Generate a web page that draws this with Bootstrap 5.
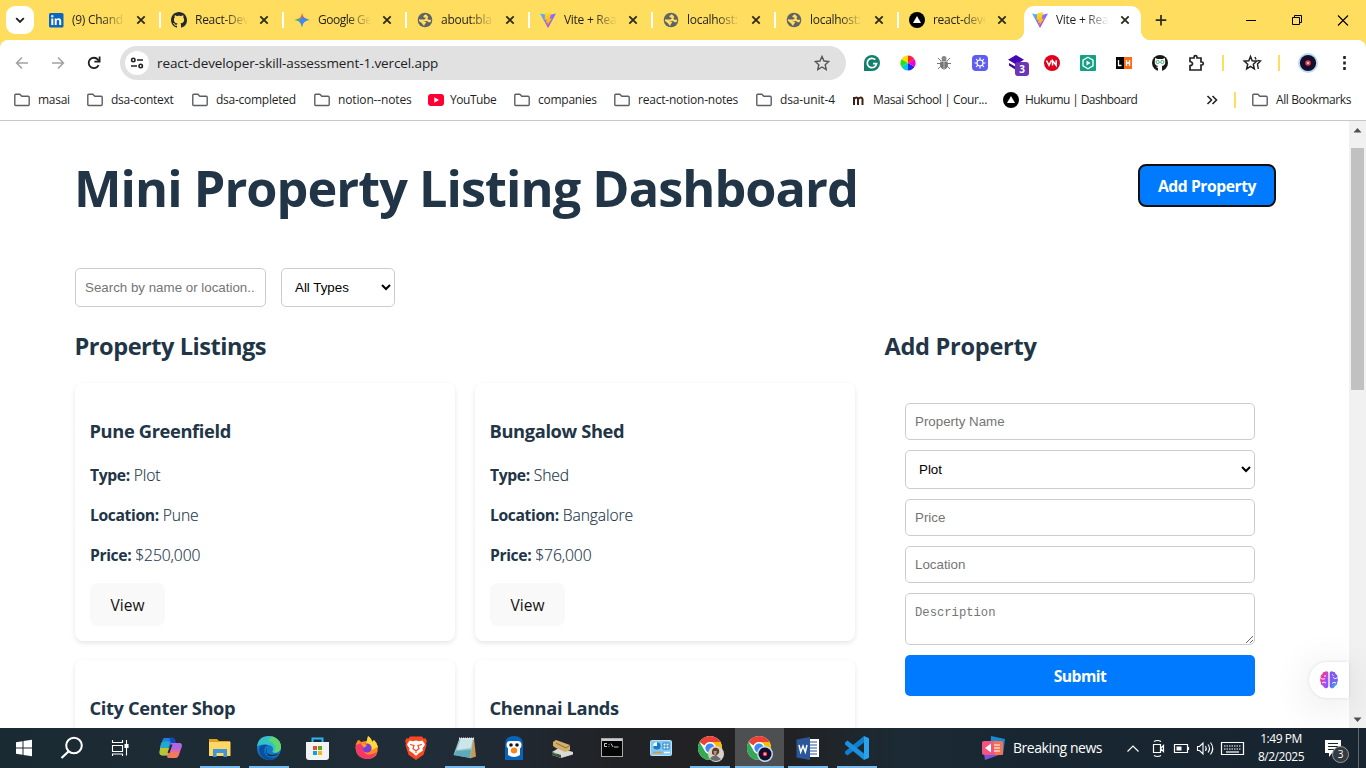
<!DOCTYPE html>
<html lang="en" data-bs-theme="light">
<head>
<meta charset="utf-8">
<meta name="viewport" content="width=device-width, initial-scale=1">
<title>Mini Property Listing Dashboard</title>
<link href="https://cdn.jsdelivr.net/npm/bootstrap@5.3.0/dist/css/bootstrap.min.css" rel="stylesheet">
<style>
  body{font-family:"Open Sans","Noto Sans",sans-serif;font-size:12px;line-height:16px;color:#1f1f1f;background:#fff}
  svg{display:block;flex:none}
  /* tab strip */
  .strip{height:40px;background:#ffdd5f;flex:none}
  .tab-search{width:28px;height:28px;margin:6px 6px 0;border-radius:9px;background:#fff}
  .tab-item{width:117px;margin-right:6px;height:34px;margin-top:6px;padding:0 8px 6px 8px;position:relative}
  .tab-item svg.fav{width:16px;height:16px;margin-right:8px;margin-left:0}
  .tab-title{width:54px;overflow:hidden;white-space:nowrap;letter-spacing:-.28px;-webkit-mask-image:linear-gradient(90deg,#000 55%,transparent 98%);mask-image:linear-gradient(90deg,#000 55%,transparent 98%)}
  .tab-close{margin-left:10px}
  .tab-item:not(.on):not(.last)::after{content:"";position:absolute;right:-4px;top:6px;width:2px;height:16px;background:#fff}
  .tab-item.on{background:#fff;border-radius:10px 10px 0 0}
  .tab-item.on::before,.tab-item.on::after{content:"";position:absolute;bottom:0;width:10px;height:10px}
  .tab-item.on::before{left:-10px;background:radial-gradient(circle at 0 0,transparent 10px,#fff 10.5px)}
  .tab-item.on::after{right:-10px;background:radial-gradient(circle at 100% 0,transparent 10px,#fff 10.5px)}
  .win-btns{width:138px;height:40px}
  .win-btns svg{width:46px}
  /* toolbar */
  .tools{height:46px;flex:none;background:linear-gradient(#ffdd5f,#ffdd5f) top/100% 10px no-repeat}
  .tools>div{background:#fff;border-radius:8px 8px 0 0;height:46px}
  .omni{width:726px;height:34px;border-radius:17px;background:#e1e1e1;padding:0 16px 0 5px}
  .site-info{width:24px;height:24px;border-radius:50%;background:#fff}
  .url{font-size:13.5px;letter-spacing:-.11px;margin-left:8px;color:#202124}
  .ext{width:36px;position:relative}
  .ext-num{position:absolute;left:17px;top:7px;width:14px;height:14px;border-radius:3px;background:#6b35b5;color:#fff;font:bold 10px/14px "Open Sans",sans-serif;text-align:center}
  .vbar{width:2px;height:16px;background:#ffdd5f}
  /* bookmarks */
  .marks{height:35px;flex:none;padding:0 0 7px 14px;border-bottom:1px solid #c7c7c7;display:grid;grid-template-columns:73px 105px 122px 114px 86px 100px 142px 96px 151px 203px 28px 18px auto}
  .marks>div{display:flex;align-items:center;white-space:nowrap}
  .marks span{margin-left:8px;letter-spacing:-.26px}
  /* page */
  .view{height:607px;flex:none;overflow:hidden;color:#213547}
  .page{width:1349px;padding:31px 74px 0 75px;position:relative;font-size:15.7px;line-height:24px}
  .page h1{font-size:50.4px;line-height:56px;font-weight:700;letter-spacing:-.95px;margin:8px 0 0 -1px}
  .page h2{font-size:23.6px;line-height:29px;font-weight:700;letter-spacing:-.48px;margin:0 0 0 -.5px}
  .page h3{font-size:18.3px;line-height:24px;font-weight:700;letter-spacing:-.36px;margin:0 0 20px -.5px}
  .add{width:138px;height:43px;border:2px solid #101010;border-radius:8px;background:#007bff;color:#fff;font-weight:700;font-size:15.7px;letter-spacing:-.45px;margin:12px -1px 0 0;padding:0}
  .ctl{font-family:"Liberation Sans",Arial,sans-serif;font-size:13.333px;line-height:normal;border:1px solid #ccc;border-radius:5px;background:#fff;color:#000;padding:9px 9px;margin:0;height:37px;display:block}
  .ctl::placeholder{color:#757575;opacity:1}
  select.ctl{height:39px}
  textarea.ctl{height:52px;font-family:"Liberation Mono",monospace;font-size:12.2px;padding-top:12px;resize:both}
  .listing{width:780px;display:grid;grid-template-columns:380px 380px;gap:19px 20px;margin-top:22px}
  .prop{height:258px;border-radius:8px;padding:36px 15px 0;box-shadow:0 2px 5px rgba(0,0,0,.1)}
  .prop p{margin:0 0 16px;letter-spacing:-.12px;font-weight:300;-webkit-text-stroke:.15px #213547}
  .prop b{font-weight:700;letter-spacing:-.38px;-webkit-text-stroke:0}
  .view-btn{width:75px;height:43px;border:0;border-radius:8px;background:#f9f9f9;color:#111;font-size:15.5px;font-weight:400;padding:0}
  .form-col{width:390px;margin-left:30px}
  .form-box{padding:20px 20px 0;margin-top:22px;display:grid;gap:10px;width:390px}
  .submit{height:41px;border:0;border-radius:5px;background:#007bff;color:#fff;font-weight:700;letter-spacing:-.55px}
  .brain{position:absolute;right:0;top:541px;width:40px;height:36px;border-radius:18px 0 0 18px;background:#fff;box-shadow:0 0 3px rgba(0,0,0,.12),0 6px 40px rgba(0,0,0,.12);padding:8px 0 0 10px}
  .sbar{width:17px;background:#f1f1f1}
  .sbar i{display:block;width:13px;height:242px;background:#c1c1c1;margin:0 auto}
  /* taskbar */
  .task{height:40px;flex:none;background:linear-gradient(90deg,#1a2a33 0,#1c2b34 12%,#202d38 30%,#202a35 36%,#212225 45%,#222224 58%,#1b2a34 66%,#182631 75%,#182531);color:#fff}
  .tk{width:49px;height:40px;position:relative}
  .tk.s{width:48px}
  .tk.run::after{content:"";position:absolute;bottom:0;left:4px;width:40px;height:2px;background:#76b9ed}
  .tk.cur{background:#4e4f51}
  .tk.cur::after{left:0;width:49px}
  .clock{width:60px;line-height:18px;letter-spacing:-.48px;margin-left:3px}
  .note-n{position:absolute;left:10px;top:18px;width:17px;height:17px;border-radius:50%;border:1px solid #9a9a9a;background:#333a40;font-size:10px;line-height:15px;text-align:center}
</style>
</head>
<body class="vh-100 overflow-hidden d-flex flex-column">

<svg width="0" height="0" class="position-absolute">
  <defs>
    <linearGradient id="gv" x1="0" y1="0" x2="1" y2="1"><stop offset="0" stop-color="#41c8ff"/><stop offset=".75" stop-color="#b03bfd"/></linearGradient>
    <linearGradient id="gy" x1="0" y1="0" x2="0" y2="1"><stop offset="0" stop-color="#ffdc30"/><stop offset="1" stop-color="#ffa800"/></linearGradient>
    <linearGradient id="gb" x1="0" y1="0" x2="1" y2="1"><stop offset="0" stop-color="#ff9a2e"/><stop offset=".3" stop-color="#e9399d"/><stop offset=".6" stop-color="#b14df0"/><stop offset="1" stop-color="#7a5cf7"/></linearGradient>
    <symbol id="x" viewBox="0 0 10 10"><path d="M1.300 1.300l7.400 7.400M8.700 1.300L1.300 8.700" stroke="#2a2a20" stroke-width="1.800"/></symbol>
    <symbol id="vite" viewBox="0 0 16 16"><path d="M0 1.600L8 16 16 1.600 8.500 3z" fill="url(#gv)"/><path d="M11.200 0L5 1.300 4.600 8l1.900-.4L6 11l1.800-.5L7.200 14 12 6.600l-2.400.4z" fill="url(#gy)"/></symbol>
    <symbol id="globe" viewBox="0 0 16 16"><circle cx="8" cy="8" r="7.300" fill="#5f6368"/><path d="M9 2.200Q6.500 3 6.300 4.600q0 1 1.400 1 1.200 0 .8 1.200-.4.800-2 .7L4 7.400 2.200 7.200l-.4 1.600 3.600 3q.6 1.800 1.900 2l.5-1.700 1.500-1.300q-.4-1.700-2.200-1.600L6 8.800q1 .4 3.600.3 1 .2 1.400 1 1.600.4 2.800-.4l.3-2.300q-1.800 1-3.300-.2-.8-1.400.6-2.300z" fill="#ffdd5f"/></symbol>
    <symbol id="gh" viewBox="0 0 16 16"><path fill="#24292f" d="M8 0C3.580 0 0 3.580 0 8c0 3.540 2.290 6.530 5.470 7.590.4.070.55-.17.55-.38 0-.19-.01-.82-.01-1.490-2.010.37-2.530-.49-2.690-.94-.09-.23-.48-.94-.82-1.130-.28-.15-.68-.52-.01-.53.63-.01 1.080.58 1.230.82.72 1.210 1.870.87 2.330.66.070-.52.28-.87.51-1.070-1.780-.2-3.640-.89-3.640-3.950 0-.87.31-1.590.82-2.150-.08-.2-.36-1.020.08-2.120 0 0 .67-.21 2.200.82.64-.18 1.320-.27 2-.27s1.360.09 2 .27c1.530-1.040 2.200-.82 2.200-.82.44 1.100.16 1.920.08 2.120.51.56.82 1.270.82 2.150 0 3.070-1.870 3.750-3.650 3.950.29.25.54.73.54 1.480 0 1.070-.01 1.930-.01 2.200 0 .21.15.46.55.38A8.010 8.010 0 0 0 16 8c0-4.420-3.580-8-8-8z"/></symbol>
    <symbol id="tri" viewBox="0 0 16 16"><circle cx="8" cy="8" r="8" fill="#000"/><path d="M8 4l4 7H4z" fill="#fff"/></symbol>
    <symbol id="fold" viewBox="0 0 16 14"><path d="M.8 11.500V2.200q0-1 1-1h4l2 2h6.400q1 0 1 1v7.300q0 1-1 1H1.800q-1 0-1-1z" fill="none" stroke="#5b5e62" stroke-width="1.400"/></symbol>
    <symbol id="chrome" viewBox="0 0 24 24"><circle cx="12" cy="12" r="12" fill="#fff"/><path d="M12 0a12 12 0 0 1 10.400 6H12a6 6 0 0 0-5.500 3.500L1.600 6A12 12 0 0 1 12 0z" fill="#ea4335"/><path d="M22.400 6A12 12 0 0 1 12 24l5.200-9A6 6 0 0 0 12 6z" fill="#fbbc05"/><path d="M1.600 6A12 12 0 0 0 12 24l5.200-9a6 6 0 0 1-10.400 0z" fill="#34a853"/><circle cx="12" cy="12" r="5.800" fill="#fff"/><circle cx="12" cy="12" r="4.600" fill="#4285f4"/></symbol>
    <symbol id="disc" viewBox="0 0 18 18"><circle cx="9" cy="9" r="9" fill="#b9dcf5"/><circle cx="9" cy="9" r="7.300" fill="#160f2b"/><circle cx="9" cy="9" r="2.500" fill="#e83e58"/><circle cx="9" cy="9" r="1" fill="#ffd9d0"/></symbol>
  </defs>
</svg>

<!-- Tab strip -->
<header class="strip d-flex">
  <div class="tab-search d-flex align-items-center justify-content-center"><svg width="10" height="7"><path d="M1.200 1.200L5 5l3.800-3.800" fill="none" stroke="#222" stroke-width="1.900"/></svg></div>
  <div class="tab-item d-flex align-items-center"><svg class="fav" viewBox="0 0 16 16"><rect x="1" y="1" width="14.500" height="14.500" rx="1.500" fill="#0a66c2"/><path d="M3.300 6.500h2v6.500h-2zM3.200 3.300h2.200v2H3.200zM6.700 6.500h1.900v.9c1-1.700 4.600-1.600 4.600 1.500V13h-2V9.500c0-2-2.500-1.800-2.500 0V13h-2z" fill="#fff"/></svg><div class="tab-title">(9) Chand</div><svg class="tab-close" width="10" height="10"><use href="#x"/></svg></div>
  <div class="tab-item d-flex align-items-center"><svg class="fav"><use href="#gh"/></svg><div class="tab-title">React-Dev</div><svg class="tab-close" width="10" height="10"><use href="#x"/></svg></div>
  <div class="tab-item d-flex align-items-center"><svg class="fav" viewBox="0 0 16 16"><path d="M8 .5C8.500 5 11 7.500 15.500 8L8 8.500z" fill="#ea4a45"/><path d="M8 .5C7.500 5 5 7.500.500 8L8 9z" fill="#e9744a"/><path d="M.5 8C5 8.500 7.500 11 8 15.500L9 7 5 6.500z" fill="#4fb06a"/><path d="M15.500 8C11 8.500 8.500 11 8 15.500c-.3-3-1.500-5-3-6L8 5l3 1z" fill="#4187f3"/></svg><div class="tab-title" style="letter-spacing:-.5px">Google Ge</div><svg class="tab-close" width="10" height="10"><use href="#x"/></svg></div>
  <div class="tab-item d-flex align-items-center"><svg class="fav"><use href="#globe"/></svg><div class="tab-title">about:bla</div><svg class="tab-close" width="10" height="10"><use href="#x"/></svg></div>
  <div class="tab-item d-flex align-items-center"><svg class="fav"><use href="#vite"/></svg><div class="tab-title">Vite + Rea</div><svg class="tab-close" width="10" height="10"><use href="#x"/></svg></div>
  <div class="tab-item d-flex align-items-center"><svg class="fav"><use href="#globe"/></svg><div class="tab-title">localhost:</div><svg class="tab-close" width="10" height="10"><use href="#x"/></svg></div>
  <div class="tab-item d-flex align-items-center"><svg class="fav"><use href="#globe"/></svg><div class="tab-title">localhost:</div><svg class="tab-close" width="10" height="10"><use href="#x"/></svg></div>
  <div class="tab-item last d-flex align-items-center"><svg class="fav"><use href="#tri"/></svg><div class="tab-title">react-deve</div><svg class="tab-close" width="10" height="10"><use href="#x"/></svg></div>
  <div class="tab-item on d-flex align-items-center"><svg class="fav"><use href="#vite"/></svg><div class="tab-title">Vite + Rea</div><svg class="tab-close" width="10" height="10"><use href="#x"/></svg></div>
  <svg width="28" height="40"><path d="M14 15v10.500M8.700 20.200h10.600" stroke="#2a2a20" stroke-width="1.700"/></svg>
  <div class="win-btns d-flex ms-auto">
    <svg height="40"><path d="M18 20.500h10" stroke="#000"/></svg>
    <svg height="40"><path d="M18.500 17.500h7v7h-7zM20.500 17v-1.500h7v7H26" fill="none" stroke="#000"/></svg>
    <svg height="40"><path d="M18 15.500l10 10M28 15.500l-10 10" stroke="#000" stroke-width="1.100"/></svg>
  </div>
</header>

<!-- Toolbar -->
<nav class="tools">
  <div class="d-flex align-items-center">
    <svg width="120" height="46" fill="none" stroke-width="1.600"><path d="M28 23H17.500M22 17.500L16.600 23l5.400 5.500" stroke="#a3a3a3"/><path d="M52 23h10.500M58 17.500l5.400 5.500-5.400 5.500" stroke="#a3a3a3"/><path d="M98.600 25.200a5.200 5.200 0 1 1-.7-5.600l1 1.200" stroke="#202020" stroke-width="1.800"/><path d="M99.600 16.500v5.200h-5.200" stroke="#202020" stroke-width="1.800"/></svg>
    <div class="omni d-flex align-items-center">
      <div class="site-info d-flex align-items-center justify-content-center"><svg width="14" height="12" fill="none" stroke="#222" stroke-width="1.600"><circle cx="3.300" cy="3" r="1.700"/><path d="M7 3h6M1 9h6"/><circle cx="10.700" cy="9" r="1.700"/></svg></div>
      <span class="url">react-developer-skill-assessment-1.vercel.app</span>
      <svg class="ms-auto" width="16" height="16"><path d="M8 1.500l2 4.500 4.800.5-3.600 3.200 1 4.800L8 12l-4.200 2.500 1-4.800L1.200 6.500 6 6z" fill="none" stroke="#555" stroke-width="1.400"/></svg>
    </div>
    <div class="d-flex align-items-center ms-2">
      <div class="ext"><svg class="mx-auto" width="16" height="16"><path d="M0 16V8a8 8 0 1 1 8 8z" fill="#12806a"/><path d="M11.300 4.700A4.700 4.700 0 1 0 12.600 8.600H9" fill="none" stroke="#fff" stroke-width="1.700"/></svg></div>
      <div class="ext"><svg class="mx-auto" width="16" height="16"><path d="M8 8V.5a7.500 7.500 0 0 1 6.500 3.800z" fill="#f23"/><path d="M8 8L1.500 4.200A7.500 7.500 0 0 1 8 .5z" fill="#fd0"/><path d="M8 8L1.500 11.800A7.500 7.500 0 0 1 1.500 4.200z" fill="#3d1"/><path d="M8 8v7.500a7.500 7.500 0 0 1-6.500-3.700z" fill="#0cd"/><path d="M8 8l6.500 3.800A7.500 7.500 0 0 1 8 15.500z" fill="#22e"/><path d="M8 8l6.500-3.800a7.500 7.500 0 0 1 0 7.600z" fill="#e0d"/></svg></div>
      <div class="ext"><svg class="mx-auto" width="16" height="16"><path d="M2 3l3 3M14 3l-3 3M1 8.500h14M2 14l3-3M14 14l-3-3" stroke="#777" stroke-width="1"/><ellipse cx="8" cy="9.500" rx="4" ry="5" fill="#777"/><circle cx="8" cy="3.500" r="2.500" fill="#888"/><path d="M4.500 6.500h7M8 7v7" stroke="#bbb"/></svg></div>
      <div class="ext"><svg class="mx-auto" width="16" height="16"><rect width="16" height="16" rx="4" fill="#5f5cf0"/><path d="M8 2.500v11M2.500 8h11M4.100 4.100l7.800 7.800M11.900 4.100l-7.800 7.800" stroke="#fff" stroke-width="1.200"/><circle cx="8" cy="8" r="3" fill="#5f5cf0" stroke="#fff" stroke-width="1.200"/></svg></div>
      <div class="ext"><svg class="mx-auto" width="16" height="16"><path d="M8 0l8 4.800-8 4.800-8-4.800z" fill="#4308b5"/><path d="M1 8l7 4 7-4v2.500L8 15l-7-4.500z" fill="#36059a"/></svg><div class="ext-num">3</div></div>
      <div class="ext"><svg class="mx-auto" width="16" height="16"><circle cx="8" cy="8" r="8" fill="#e0001b"/><path d="M2.500 5.500L5 10.300l2.300-4.800M8.500 10.500v-4.800l3.700 4.600v-5" fill="none" stroke="#fff" stroke-width="1.500"/></svg></div>
      <div class="ext"><svg class="mx-auto" width="16" height="16"><rect width="16" height="16" rx="1" fill="#12a184"/><path d="M8 2.200l5 2.900v5.800l-5 2.900-5-2.900V5.100z" fill="none" stroke="#fff" stroke-width="1.300"/><path d="M6.500 5.500L10.500 8l-4 2.500z" fill="#fff"/></svg></div>
      <div class="ext"><svg class="mx-auto" width="16" height="12"><path d="M0 0h8v12H0z" fill="#050505"/><path d="M8 0h8v12H8z" fill="#ff6a13"/><path d="M2.500 3v5.500h3M10.500 3v6M13.500 3v6M10.500 6h3" fill="none" stroke="#fff" stroke-width="1.300"/></svg></div>
      <div class="ext"><svg class="mx-auto" width="16" height="16"><circle cx="8" cy="8" r="8" fill="#181818"/><path d="M3 5V3l2.500 1h5L13 3v2q1 4-1.500 5.500L10 11v5H6v-3l-2-1 2-.5V11l-1.500-.5Q2 9 3 5z" fill="#fff"/><circle cx="5.600" cy="7" r="1.600" fill="none" stroke="#4bb07b"/><circle cx="10.400" cy="7" r="1.600" fill="none" stroke="#4bb07b"/></svg></div>
      <div class="ext"><svg class="mx-auto" width="18" height="18"><path d="M3 4h4V3.200a1.500 1.500 0 0 1 3 0V4h4v4h.8a1.500 1.500 0 0 1 0 3H14v5H3v-4.300q2.500-.4 2.500-2T3 7.500z" fill="none" stroke="#222" stroke-width="1.700"/></svg></div>
      <div class="vbar mx-2"></div>
      <svg width="42" height="20"><path d="M18.500 3.500l1.700 4.300 4.500.4-3.400 3 1 4.600-3.800-2.500-3.800 2.500 1-4.600-3.400-3 4.500-.4z" fill="none" stroke="#222" stroke-width="1.500"/><path d="M23 4l1 2.500M25.500 7.500l3 .5-3 3 .8 5" fill="none" stroke="#222" stroke-width="1.400"/></svg>
      <div class="vbar ms-1"></div>
      <svg style="margin-left:17px" width="22" height="22"><use href="#disc" x="1" y="1" width="20" height="20"/></svg>
      <svg width="40" height="18" style="margin-left:5px"><path d="M20.500 2v3M20.500 7.500v3M20.500 13v3" stroke="#222" stroke-width="2.600"/></svg>
    </div>
  </div>
</nav>

<!-- Bookmarks -->
<div class="marks">
  <div><svg width="16" height="14"><use href="#fold"/></svg><span>masai</span></div>
  <div><svg width="16" height="14"><use href="#fold"/></svg><span>dsa-context</span></div>
  <div><svg width="16" height="14"><use href="#fold"/></svg><span>dsa-completed</span></div>
  <div><svg width="16" height="14"><use href="#fold"/></svg><span style="letter-spacing:-.14px">notion--notes</span></div>
  <div><svg width="16" height="12"><rect width="16" height="12" rx="3" fill="#f03"/><path d="M6.300 3.300L11 6 6.300 8.700z" fill="#fff"/></svg><span style="letter-spacing:-.45px;margin-left:6px">YouTube</span></div>
  <div><svg width="16" height="14"><use href="#fold"/></svg><span>companies</span></div>
  <div><svg width="16" height="14"><use href="#fold"/></svg><span style="letter-spacing:-.21px">react-notion-notes</span></div>
  <div><svg width="16" height="14"><use href="#fold"/></svg><span style="letter-spacing:-.14px">dsa-unit-4</span></div>
  <div><svg width="14" height="12"><path d="M2 11V3M2 5q3-3 4 0v6M6 5q3.500-3 4.500 0v6" fill="none" stroke="#3c2218" stroke-width="2"/></svg><span style="letter-spacing:-.39px;margin-left:7px">Masai School | Cour...</span></div>
  <div><svg width="16" height="16"><use href="#tri"/></svg><span style="margin-left:6px;letter-spacing:-.6px">Hukumu | Dashboard</span></div>
  <div><svg width="12" height="10"><path d="M1.500 1l4 4-4 4M6.500 1l4 4-4 4" fill="none" stroke="#222" stroke-width="1.600"/></svg></div>
  <div><i class="vbar"></i></div>
  <div><svg width="16" height="14"><use href="#fold"/></svg><span style="letter-spacing:-.38px">All Bookmarks</span></div>
</div>

<!-- Page -->
<div class="view d-flex">
  <main class="page">
    <div class="d-flex justify-content-between align-items-start">
      <h1>Mini Property Listing Dashboard</h1>
      <button class="add">Add Property</button>
    </div>
    <div class="d-flex" style="margin-top:52px">
      <input class="ctl" style="width:191px;height:39px" placeholder="Search by name or location...">
      <select class="ctl" style="width:114px;margin-left:15px"><option>All Types</option></select>
    </div>
    <div class="d-flex" style="margin-top:25px">
      <section>
        <h2>Property Listings</h2>
        <div class="listing">
          <article class="prop"><h3>Pune Greenfield</h3><p><b>Type:</b> Plot</p><p><b>Location:</b> Pune</p><p><b>Price:</b> $250,000</p><button class="view-btn">View</button></article>
          <article class="prop"><h3>Bungalow Shed</h3><p><b>Type:</b> Shed</p><p><b>Location:</b> Bangalore</p><p><b>Price:</b> $76,000</p><button class="view-btn">View</button></article>
          <article class="prop"><h3>City Center Shop</h3></article>
          <article class="prop"><h3>Chennai Lands</h3></article>
        </div>
      </section>
      <section class="form-col">
        <h2 style="letter-spacing:-.3px">Add Property</h2>
        <form class="form-box">
          <input class="ctl" placeholder="Property Name">
          <select class="ctl"><option>Plot</option></select>
          <input class="ctl" placeholder="Price">
          <input class="ctl" placeholder="Location">
          <textarea class="ctl" placeholder="Description"></textarea>
          <button type="button" class="submit">Submit</button>
        </form>
      </section>
    </div>
    <div class="brain"><svg width="20" height="20"><path d="M9.300 2.500Q8 .5 6 1.700 3.500 1.700 3.300 4 1 5 1.700 8 .2 10 1.800 12.300 1.500 15 4 15.800 5 18.800 8 18q1.300-.5 1.300-2z" fill="url(#gb)"/><path d="M10.700 2.500Q12 .5 14 1.700q2.500 0 2.700 2.300 2.300 1 1.600 4 1.500 2-.1 4.300.3 2.700-2.200 3.500-1 3-4 2.200-1.300-.5-1.300-2z" fill="#7c5cf2"/><path d="M15 13l3-1q.3 3-2 3.800-1 3-4 2.200z" fill="#2fa4f7"/><path d="M2 8.500q2 1.500 4 0M6 5v2M3 13q2-2 4 0M18 8q-3 2-4-1M17 13q-2-2-4 .5M13 4.500l1.500 1" fill="none" stroke="#fff" stroke-width=".9"/></svg></div>
  </main>
  <div class="sbar">
    <svg width="17" height="27"><path d="M8.500 7l4 4.500h-8z" fill="#505050"/></svg>
    <i></i>
    <svg width="17" height="338"><path d="M8.500 332l4-4.500h-8z" fill="#505050"/></svg>
  </div>
</div>

<!-- Taskbar -->
<footer class="task d-flex">
  <div class="tk s"><svg width="48" height="40"><path d="M16 14.200l6.500-1v6.300H16zM23.500 13l8.500-1.200v7.700h-8.500zM16 20.500h6.500v6.300l-6.500-1zM23.500 20.500H32v7.700L23.500 27z" fill="#fff"/></svg></div>
  <div class="tk s"><svg width="48" height="40" fill="none" stroke="#fff"><circle cx="26" cy="17.500" r="7.800" stroke-width="2"/><path d="M20.500 23.500L13.500 30" stroke-width="2.300"/></svg></div>
  <div class="tk s"><svg width="51" height="40" fill="none" stroke="#fff" stroke-width="1.100"><path d="M16.500 12v2.500h10V12M16.500 17.500h10v6h-10zM16.500 28v-2h10v2M30.500 12v4.500M30.500 20v7.500"/><path d="M29 16.500h3v3h-3z" fill="#fff"/></svg></div>
  <div class="tk" style="margin-left:3px"><svg width="46" height="40" viewBox="0 0 46 40"><path d="M17 10h8l2.500 3-4 13q-.5 1.500-2 1.500h-6q-3.500 0-3-4l2.500-10q.8-3.500 2-3.500z" fill="#1d7de0"/><path d="M13.500 18l-1 6q-.2 3.500 3 3.500h6l2-7z" fill="#b9c531"/><path d="M14 15q3-3 9-1l-2 6h-8z" fill="#22a9c9"/><path d="M24 15h8q3.500 0 2.500 4l-2.500 8q-1 3-3.500 3H22q-2 0-1.500-2.500z" fill="#e567a5"/><path d="M24 15h8q3.500 0 2.500 4l-.8 2.500h-11z" fill="#b166e4"/><path d="M22 24h10l-1 3q-1 3-3.500 3H22q-2 0-1.500-2.500z" fill="#f27a5c"/><path d="M22 9.500h3q3 0 3.500 3.500l.5 2h-5z" fill="#1649b8"/><path d="M24.500 16.500l-3 8.500" stroke="#1b2a34" stroke-width="2"/></svg></div>
  <div class="tk run"><svg width="48" height="40"><path d="M13 11h8l2 2h11v15H13z" fill="#e6a116"/><path d="M13 14h21.500v14H13z" fill="#ffd766"/><path d="M17 21h14v8h-3.500v-4h-7v4H17z" fill="#3d95dc"/></svg></div>
  <div class="tk run"><svg width="48" height="40"><circle cx="24" cy="20" r="12" fill="#1377c9"/><path d="M12 19Q13 8 24 8c8 0 12 6 12 11 0 5-5 7-9 5 2-2 1.500-7-4-7-6-1-10 0-11 2z" fill="#35c1c8"/><path d="M27 8.500c6 1.500 9 6 9 10.500 0 4-4 6-8 5.500 4-3 3-10-5-12z" fill="#5fd76a"/><path d="M20 19q-3 7 4 10 5 2 9-1-4 5-10 4-9-2-9-11 1-5 9-4z" fill="#0b4f9f"/><path d="M22 19q-3 7 5 8 4 0 7-2l-2 2q-5 2-8 1-5-3-2-9z" fill="#1b2a34"/></svg></div>
  <div class="tk"><svg width="48" height="40"><path d="M18.500 15V10.500h10V15" fill="none" stroke="#2eb5ef" stroke-width="2"/><path d="M12 14h23v15q0 3-3 3H15q-3 0-3-3z" fill="#f2f2f2"/><path d="M19 18h4v4h-4z" fill="#e5502c"/><path d="M24 18h4v4h-4z" fill="#58a818"/><path d="M19 23h4v4h-4z" fill="#0ba1e8"/><path d="M24 23h4v4h-4z" fill="#f9b50c"/></svg></div>
  <div class="tk"><svg width="48" height="40"><path d="M15 12q2 0 3 2 4-1 6-1l1-5q4 3 4 6l2-2q5 5 3.500 11.500Q33 31 24 31 13.500 30.500 12.500 20q0-5 2.500-8z" fill="#ff8a1f"/><path d="M13 17q5-3 8 0-4 4 2 9 5 2 11-2-3 7-10 7-10-1-11-10z" fill="#f5356c"/><path d="M25 8q4 3 4 6l2-2q3 3 4 7l-6 3q-2-5-6-6z" fill="#ffd83c"/><circle cx="24" cy="20" r="4.600" fill="#7a3dd8"/><path d="M18 16q3-1 6 1l-3 3z" fill="#ff9d25"/></svg></div>
  <div class="tk"><svg width="48" height="40"><path d="M18 8.500h12l1.500 2 2-.3 1.500 3-1 2 .5 2-3 9.500-7.500 5.300-7.500-5.300-3-9.500.5-2-1-2 1.500-3 2 .3z" fill="#fb471f"/><path d="M17.500 12.500l3.500.7 3-.7 3 .7 3.500-.7 2.500 4-2.500 4 .5 2-4.500 3L24 28l-2.500-2.500-4.500-3 .5-2-2.500-4z" fill="#fff"/><path d="M18 16.500l4 1-1 3 3 2.500 3-2.500-1-3 4-1M24 23v2" fill="none" stroke="#fb471f" stroke-width="1.200"/></svg></div>
  <div class="tk run"><svg width="48" height="40"><path d="M19 10l14 .5 2 18-6 2z" fill="#c79a52"/><path d="M18.500 10h14l-3 20-17-3z" fill="#90c4cd"/><path d="M20 10h12l-2 10-14 2z" fill="#cbe5e8"/><path d="M15 23l15-1-1 8-16-3z" fill="#5fa9b8"/><path d="M18 10.500h15" stroke="#e8e8e8" stroke-width="2" stroke-dasharray="1 1"/></svg></div>
  <div class="tk"><svg width="48" height="40"><path d="M15 32V17q0-9 9-9t9 9v15z" fill="#0864b8"/><path d="M18 27V16q0-3 6-3t6 3v11q-6 4-12 0z" fill="#fff"/><circle cx="20.500" cy="17" r="4" fill="#fff"/><circle cx="27.500" cy="17" r="4" fill="#fff"/><circle cx="21" cy="17" r="1.800" fill="#151515"/><circle cx="27" cy="17" r="1.800" fill="#151515"/><ellipse cx="24" cy="22.500" rx="3.200" ry="3" fill="#f58a1e"/></svg></div>
  <div class="tk"><svg width="48" height="40"><path d="M13 24l7-4 14 4v2.500L22 30l-9-3z" fill="#d9dad6"/><path d="M13 24l9 3v3l-9-3z" fill="#454945"/><path d="M14 14l3-2 14 5v5l-5 2-9-4-3-2z" fill="#d2b06a"/><path d="M17 15l10 5 4-3" fill="none" stroke="#8d703a"/><path d="M15 25l3 1" stroke="#3fcf55" stroke-width="1.300"/></svg></div>
  <div class="tk"><svg width="48" height="40"><rect x="13.500" y="10.500" width="21" height="18" fill="#050505" stroke="#aaa"/><path d="M14 12h20" stroke="#c9ccd2" stroke-width="2"/><path d="M19 15.500h-2.500v3H19M21 16v.8M21 18.300v.8M23 15.500l2 3.500M26 19h4.500" fill="none" stroke="#ddd" stroke-width=".9"/></svg></div>
  <div class="tk"><svg width="48" height="40"><rect x="13.500" y="12.500" width="21" height="15" rx="1" fill="#7cc9f5" stroke="#b7e2fa"/><circle cx="20" cy="18" r="3.800" fill="#fff"/><path d="M20 18v-3.800A3.800 3.800 0 1 1 16.200 18z" fill="#1878c9"/><path d="M26 15h6v6h-6zM29 15v6M26 18h6" fill="#e7f6ff" stroke="#1c6fb5" stroke-width=".8"/><path d="M16 24.500h9" stroke="#f09222" stroke-width="1.500"/><path d="M27 24.500h6" stroke="#fff" stroke-width="1.500"/></svg></div>
  <div class="tk run"><svg width="48" height="40"><use href="#chrome" x="12" y="8" width="24" height="24"/><circle cx="30" cy="26" r="8" fill="#d7d2c9"/><path d="M26 23q1-4 5-3 3 1 2 5l-3 3-4-2z" fill="#5c3d2b"/><path d="M24 31q2-4 7-3l4 3q-5 4-11 0z" fill="#666d70"/><path d="M27.500 23h3.500l-1 4-2-.5z" fill="#c28f6c"/></svg></div>
  <div class="tk run cur"><svg width="48" height="40"><use href="#chrome" x="12" y="8" width="24" height="24"/><use href="#disc" x="22" y="18" width="16" height="16"/></svg></div>
  <div class="tk run"><svg width="48" height="40"><path d="M24 11h11v18H24z" fill="#fff"/><path d="M26 14h7M26 17h7M26 20h7M26 23h7M26 26h7" stroke="#2b579a" stroke-width="1.100"/><path d="M12.500 11.500L26 9v23l-13.500-2.500z" fill="#2b579a"/><path d="M15 17l1.700 7 2.300-6 2.300 6 1.700-7" fill="none" stroke="#fff" stroke-width="1.500"/></svg></div>
  <div class="tk run"><svg width="48" height="40"><path d="M31 8l5 2.300v19.400L31 32z" fill="#2aa3ee"/><path d="M31 8v6.500L14.500 27.500 12 25.500v-2z" fill="#0f7fd0"/><path d="M31 32v-6.500L14.500 12.500 12 14.500v2z" fill="#1a90df"/></svg></div>

  <div class="d-flex align-items-center ms-auto" style="width:386px">
    <svg width="26" height="28"><path d="M11 2l14 3-2 16-13-3z" fill="#168bd8"/><path d="M3 14l13-4 3 11-14 5z" fill="#7655d9"/><rect x="2" y="7" width="21" height="14" rx="2" fill="#f4527f"/><path d="M13 7h8q2 0 2 2v10q0 2-2 2h-6z" fill="#f8704f"/><path d="M5 14l6-4.500v9z" fill="#fff"/><path d="M14 11h6M14 14h6M14 17h6" stroke="#ffd7cc" stroke-width="1.300"/></svg>
    <span style="font-size:14px;letter-spacing:-.47px;margin-left:7px;width:105px" class="text-nowrap">Breaking news</span>
    <svg width="130" height="40" fill="none" stroke="#fff" stroke-width="1.200"><path d="M9.500 23.500l5.500-5.500 5.500 5.500"/><path d="M35.500 16.500h7v8h-7zM43 20l2.500-2.500v6L43 21M36 13.500q3.500-2 7 0M36 27.500q3.500 2 7 0"/><path d="M56.500 16.500h13v8h-13z"/><path d="M58.500 18.500h5v4h-5z" fill="#fff" stroke="none"/><path d="M70.500 19v3"/><path d="M79.500 18.500h2l3.500-3.500v11l-3.500-3.500h-2zM87.500 18q1.500 2.500 0 5M90 16.500q3 4 0 8M92.500 14.500q4.500 6 0 12" stroke-width="1.100"/><path d="M103.500 14.500h22v12h-22z"/><path d="M106 18h17M106 21h17" stroke-dasharray="1.500 1"/><path d="M108 24h13"/></svg>
    <div class="clock text-center text-nowrap">1:49 PM<br>8/2/2025</div>
    <div class="position-relative align-self-stretch" style="width:36px;margin-left:11px"><svg width="26" height="40"><path d="M3 12h16v13H10l-3 4v-4H3z" fill="#fff"/><path d="M6 15.500h10M6 18.500h10M6 21.500h6" stroke="#182531"/></svg><div class="note-n">3</div></div>
    <div class="align-self-stretch" style="width:1px;background:#5d6870"></div>
  </div>
</footer>
<script src="https://cdn.jsdelivr.net/npm/bootstrap@5.3.0/dist/js/bootstrap.bundle.min.js"></script>
</body>
</html>
